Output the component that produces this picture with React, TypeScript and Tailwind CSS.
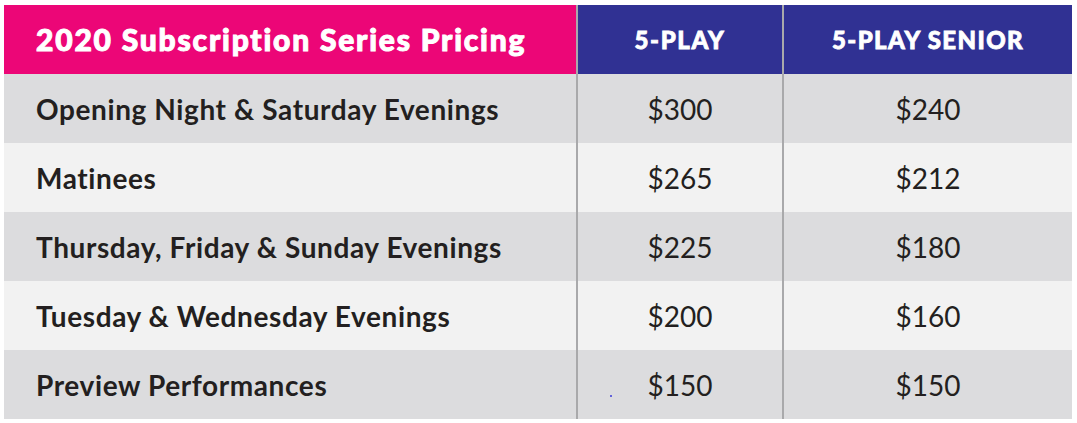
import React from "react";

const rows = [
  { label: "Opening Night & Saturday Evenings", a: "$300", b: "$240" },
  { label: "Matinees", a: "$265", b: "$212" },
  { label: "Thursday, Friday & Sunday Evenings", a: "$225", b: "$180" },
  { label: "Tuesday & Wednesday Evenings", a: "$200", b: "$160" },
  { label: "Preview Performances", a: "$150", b: "$150" },
];

export default function App() {
  return (
    <div className="w-[1077px] h-[423px] bg-white pt-[5px] pl-[4px]" style={{ fontFamily: "Lato, 'Liberation Sans', sans-serif" }}>
      <div className="w-[1068px] flex flex-col">
        <div className="grid grid-cols-[572px_206px_290px] h-[69px]">
          <div className="bg-[#ec0677] flex items-center pl-[32px] text-white font-black text-[30px] tracking-[1.8px] [-webkit-text-stroke:1px_white]">
            2020 Subscription Series Pricing
          </div>
          <div className="bg-[#303193] border-l-2 border-[#a9a9ab] flex items-center justify-center text-white font-black text-[24px] tracking-[1.6px] [-webkit-text-stroke:0.8px_white]">
            5-PLAY
          </div>
          <div className="bg-[#303193] border-l-2 border-[#a9a9ab] flex items-center justify-center text-white font-black text-[24px] tracking-[1.4px] [-webkit-text-stroke:0.8px_white]">
            5-PLAY SENIOR
          </div>
        </div>
        {rows.map((r, i) => (
          <div
            key={r.label}
            className={
              "grid grid-cols-[572px_206px_290px] h-[69px] text-[#231f20] " +
              (i % 2 === 0 ? "bg-[#dcdcde]" : "bg-[#f2f2f2]")
            }
          >
            <div className="flex items-center pl-[32px] font-bold text-[28px] tracking-[0.6px]">{r.label}</div>
            <div className="relative border-l-2 border-[#a9a9ab] flex items-center justify-center font-normal text-[28px]">
              {r.a}
              {i === 4 && <span className="absolute left-[32px] top-[45px] w-[2px] h-[2px] bg-[#3b3bd9] rounded-full" />}
            </div>
            <div className="border-l-2 border-[#a9a9ab] flex items-center justify-center font-normal text-[28px]">{r.b}</div>
          </div>
        ))}
      </div>
    </div>
  );
}
